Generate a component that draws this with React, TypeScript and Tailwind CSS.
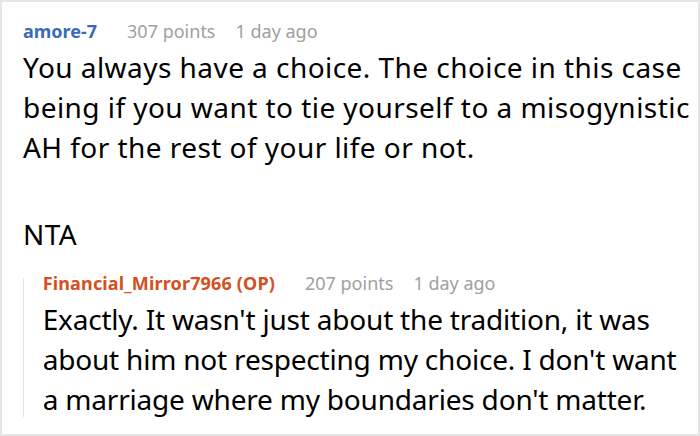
import React from 'react';

interface Reply {
  author: string;
  points: number;
  age: string;
  body: string[];
  isOp?: boolean;
}

const reply: Reply = {
  author: 'Financial_Mirror7966 (OP)',
  points: 207,
  age: '1 day ago',
  isOp: true,
  body: [
    "Exactly. It wasn't just about the tradition, it was about him not respecting my choice. I don't want a marriage where my boundaries don't matter.",
  ],
};

const Meta = ({ author, points, age, isOp }: { author: string; points: number; age: string; isOp?: boolean }) => (
  <div className="flex items-center text-[18px] leading-[24px]">
    <span className={isOp ? 'font-bold text-[#d4511e] tracking-[0.15px]' : 'font-bold text-[#3b6bb5]'}>{author}</span>
    <span className="ml-[30px] text-[#a0a0a0]">{points} points</span>
    <span className="ml-[20px] text-[#a0a0a0]">{age}</span>
  </div>
);

const App = () => {
  return (
    <div className="w-[700px] h-[436px] overflow-hidden bg-white border-2 border-[#e6e6e6] font-['Noto_Sans',sans-serif] text-black">
      <div className="pl-[21px] pr-[4px] pt-[17px]">
        <Meta author="amore-7" points={307} age="1 day ago" />

        {/* top-level comment */}
        <div className="mt-[4px] text-[28px] leading-[40px] tracking-[0.45px]">
          <p>
            You always have a choice. The choice in this case being if you want to tie yourself to a misogynistic
            AH for the rest of your life or not.
          </p>
          <p className="mt-[47px]">NTA</p>
        </div>

        {/* nested reply */}
        <div className="mt-[17px] flex">
          <div className="w-[2px] bg-[#e2e2e2] mt-[7px] mb-[2px]" />
          <div className="pl-[19px]">
            <Meta author={reply.author} points={reply.points} age={reply.age} isOp={reply.isOp} />
            <div className="mt-[4px] text-[28px] leading-[40px] tracking-[-0.2px]">
              {reply.body.map((p, i) => (
                <p key={i}>{p}</p>
              ))}
            </div>
          </div>
        </div>
      </div>
    </div>
  );
};

export default App;
